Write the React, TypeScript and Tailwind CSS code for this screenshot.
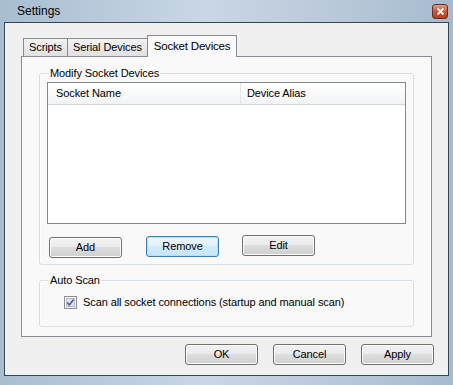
import React from "react";

const btn =
  "h-[21px] w-[73px] rounded-[3px] border border-[#707070] bg-[linear-gradient(#f2f2f2_0%,#ebebeb_45%,#dddddd_50%,#cfcfcf_100%)] text-[11px] tracking-[-0.1px] text-black shadow-[inset_0_0_0_1px_#fcfcfc]";

const focusBtn =
  "h-[21px] w-[73px] rounded-[3px] border border-[#3c7fb1] bg-[linear-gradient(#eaf6fd_0%,#e4f2fb_45%,#d2ebf9_50%,#c6e4f7_100%)] text-[11px] tracking-[-0.1px] text-black shadow-[inset_0_0_0_1px_#aee4f8]";

const Tab: React.FC<{ label: string; selected?: boolean }> = ({ label, selected }) => (
  <div
    className={
      selected
        ? "relative z-10 -mb-px -ml-px flex h-[22px] items-center border border-b-0 border-[#898c95] bg-[#f9f9f9] px-[6px] text-[11.5px] tracking-[-0.2px] text-black"
        : "-ml-px flex h-[18px] items-center border border-b-0 border-[#898c95] bg-[linear-gradient(#f3f3f3,#e0e0e0)] px-[5px] text-[11px] tracking-[-0.1px] text-black first:ml-0"
    }
  >
    {label}
  </div>
);

const CheckBox = () => (
  <svg width="13" height="13" viewBox="0 0 13 13">
    <rect x="0.5" y="0.5" width="12" height="12" fill="#f4f4f4" stroke="#8e8f8f" />
    <rect x="2.5" y="2.5" width="8" height="8" fill="#dfe3ec" stroke="#b7bcc8" />
    <path d="M3.2 6.5 L5.3 9 L9.6 3.4" fill="none" stroke="#4c61a5" strokeWidth="1.7" />
  </svg>
);

export default function App() {
  return (
    <div className="flex h-[385px] w-[453px] flex-col bg-[linear-gradient(90deg,#a9bdd1_0%,#c9d7e5_45%,#bccbdb_70%,#a6bbd0_100%)] font-['Liberation_Sans',Arial,sans-serif]">
      {/* title bar */}
      <div className="flex h-[22px] items-center justify-between pl-[17px] pr-[5px]">
        <span className="text-[12px] text-black">Settings</span>
        <div className="mt-[1px] flex h-[15px] w-[16px] items-center justify-center rounded-[3px] border border-[#6b2f22] bg-[linear-gradient(#e39b83,#c9583a_50%,#b2401f)]">
          <svg width="7" height="7" viewBox="0 0 7 7">
            <path d="M0.5 0.5 L6.5 6.5 M6.5 0.5 L0.5 6.5" stroke="#fff" strokeWidth="1.8" />
          </svg>
        </div>
      </div>

      {/* client area */}
      <div className="mx-[4px] flex h-[354px] flex-col border border-[#3a4350] bg-[#f0f0f0]">
        <div className="ml-[16px] mr-[16px] mt-[12px] flex flex-col">
          <div className="flex items-end pl-[2px]">
            <Tab label="Scripts" />
            <Tab label="Serial Devices" />
            <Tab label="Socket Devices" selected />
          </div>

          {/* tab panel */}
          <div className="flex h-[281px] flex-col border border-[#898c95] bg-[#f9f9f9] px-[17px] pt-[10px] text-[11px] tracking-[-0.1px] text-black">
            <fieldset className="rounded-[3px] border border-[#d5dfe5] px-[7px] pb-[6px] shadow-[inset_1px_1px_0_#fff]">
              <legend className="ml-[2px] px-[1px] leading-[13px]">Modify Socket Devices</legend>
              <div className="mt-[2px] flex h-[142px] flex-col border border-[#828790] bg-white">
                <div className="flex h-[22px] border-b border-[#d5d5d5] bg-[linear-gradient(#ffffff,#f2f3f5)]">
                  <div className="flex w-[193px] items-center border-r border-[#e3e5e7] pl-[8px]">Socket Name</div>
                  <div className="flex items-center pl-[6px]">Device Alias</div>
                </div>
              </div>
              <div className="mt-[11px] flex items-start pl-[2px]">
                <button className={btn + " mt-[2px]"}>Add</button>
                <button className={focusBtn + " ml-[24px] mt-[1px]"}>Remove</button>
                <button className={btn + " ml-[23px]"}>Edit</button>
              </div>
            </fieldset>

            <fieldset className="mt-[9px] h-[53px] rounded-[3px] border border-[#d5dfe5] px-[7px] shadow-[inset_1px_1px_0_#fff]">
              <legend className="ml-[2px] px-[1px] leading-[13px]">Auto Scan</legend>
              <div className="ml-[17px] mt-[7px] flex items-center gap-[6px]">
                <CheckBox />
                <span>Scan all socket connections (startup and manual scan)</span>
              </div>
            </fieldset>
          </div>
        </div>

        {/* dialog buttons */}
        <div className="mr-[14px] mt-[7px] flex justify-end gap-[15px]">
          <button className={btn}>OK</button>
          <button className={btn}>Cancel</button>
          <button className={btn}>Apply</button>
        </div>
      </div>
    </div>
  );
}
